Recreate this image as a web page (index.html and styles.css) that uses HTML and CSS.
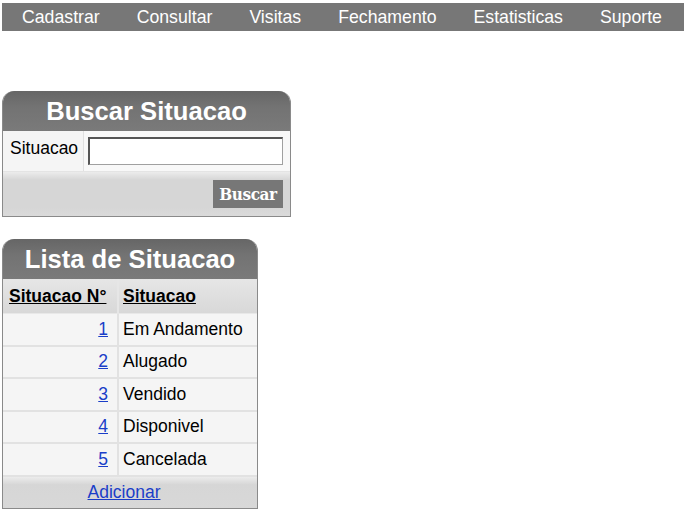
FILE: index.html
```html
<!DOCTYPE html>
<html>
<head>
<meta charset="utf-8">
<link rel="stylesheet" href="styles.css">
</head>
<body>
<nav class="menu">
  <a>Cadastrar</a>
  <a>Consultar</a>
  <a>Visitas</a>
  <a>Fechamento</a>
  <a>Estatisticas</a>
  <a>Suporte</a>
</nav>

<section class="box box-busca">
  <div class="box-title">Buscar Situacao</div>
  <div class="busca-row">
    <div class="busca-label">Situacao</div>
    <div class="busca-field"><input class="busca-input" type="text"></div>
  </div>
  <div class="busca-foot"><button class="btn">Buscar</button></div>
</section>

<section class="box box-lista">
  <div class="box-title">Lista de Situacao</div>
  <table class="lista">
    <thead>
      <tr><th class="c1"><u>Situacao N°</u></th><th class="c2"><u>Situacao</u></th></tr>
    </thead>
    <tbody>
      <tr><td class="num"><a href="#">1</a></td><td>Em Andamento</td></tr>
      <tr><td class="num"><a href="#">2</a></td><td>Alugado</td></tr>
      <tr><td class="num"><a href="#">3</a></td><td>Vendido</td></tr>
      <tr><td class="num"><a href="#">4</a></td><td>Disponivel</td></tr>
      <tr><td class="num"><a href="#">5</a></td><td>Cancelada</td></tr>
    </tbody>
  </table>
  <div class="lista-foot"><a href="#">Adicionar</a></div>
</section>
</body>
</html>
```
FILE: styles.css
```css
html, body { margin: 0; padding: 0; background: #fff; }
body {
  padding: 3px 2px;
  font-family: "Liberation Sans", Arial, sans-serif;
  font-size: 17.5px;
  color: #000;
}
.menu {
  display: flex;
  gap: 37px;
  height: 28px;
  align-items: center;
  padding-left: 20px;
  background: #777777;
  width: 682px;
  box-sizing: border-box;
}
.menu a { color: #fff; font-size: 17.7px; white-space: nowrap; }

.box {
  border: 1px solid #8a8a8a;
  border-top: none;
  border-radius: 12px 12px 0 0;
  box-sizing: border-box;
  overflow: hidden;
  background: #f4f4f4;
}
.box-busca { margin-top: 60px; width: 289px; }
.box-lista { margin-top: 22px; width: 256px; }
.box-title {
  height: 40px;
  line-height: 40px;
  text-align: center;
  color: #fff;
  font-weight: bold;
  font-size: 25.6px;
  background: linear-gradient(#666666, #737373 40%, #7a7a7a);
}
.busca-row { display: flex; height: 40px; border-bottom: 1px solid #e4e4e4; }
.busca-label {
  width: 81px;
  padding-left: 7px;
  padding-top: 7px;
  box-sizing: border-box;
  background: #f5f5f5;
  border-right: 1px solid #e0e0e0;
}
.busca-field { flex: 1; background: #f8f8f8; padding: 6px 0 0 4px; }
.busca-input {
  width: 195px;
  height: 28px;
  box-sizing: border-box;
  margin: 0;
  border: 1px solid #a0a0a0;
  border-top: 2px solid #555;
  border-left: 2px solid #555;
  background: #fff;
}
.busca-foot {
  height: 44px;
  display: flex;
  justify-content: flex-end;
  align-items: flex-start;
  padding: 8px 7px 0 0;
  box-sizing: border-box;
  background: linear-gradient(#ececec, #d6d6d6 18%, #d6d6d6 80%, #dadada);
}
.btn {
  width: 70px;
  height: 28px;
  border: none;
  background: #777777;
  color: #fff;
  font-family: "DejaVu Serif", serif;
  font-stretch: condensed;
  font-weight: bold;
  font-size: 17px;
  letter-spacing: -0.4px;
  padding: 0;
}
.lista { border-collapse: collapse; width: 100%; }
.lista th {
  height: 34px;
  text-align: left;
  padding: 0 6px;
  font-weight: bold;
  background: linear-gradient(#e6e6e6, #d8d8d8);
  border-bottom: 1px solid #e8e8e8;
}
.lista th.c1 { width: 102px; border-right: 2px solid #e6e6e6; }
.lista th.c2 { padding-left: 4px; }
.lista td {
  height: 30.5px;
  padding: 0 4px;
  background: #f5f5f5;
  border-bottom: 2px solid #e2e2e2;
}
.lista td.num { text-align: right; padding-right: 9px; border-right: 2px solid #e2e2e2; }
.lista a { color: #1a3ec8; }
.lista-foot {
  height: 31px;
  line-height: 30px;
  text-align: center;
  padding-right: 12px;
  background: linear-gradient(#ececec, #d6d6d6 25%, #d8d8d8);
}
.lista-foot a { color: #1a3ec8; }
```
